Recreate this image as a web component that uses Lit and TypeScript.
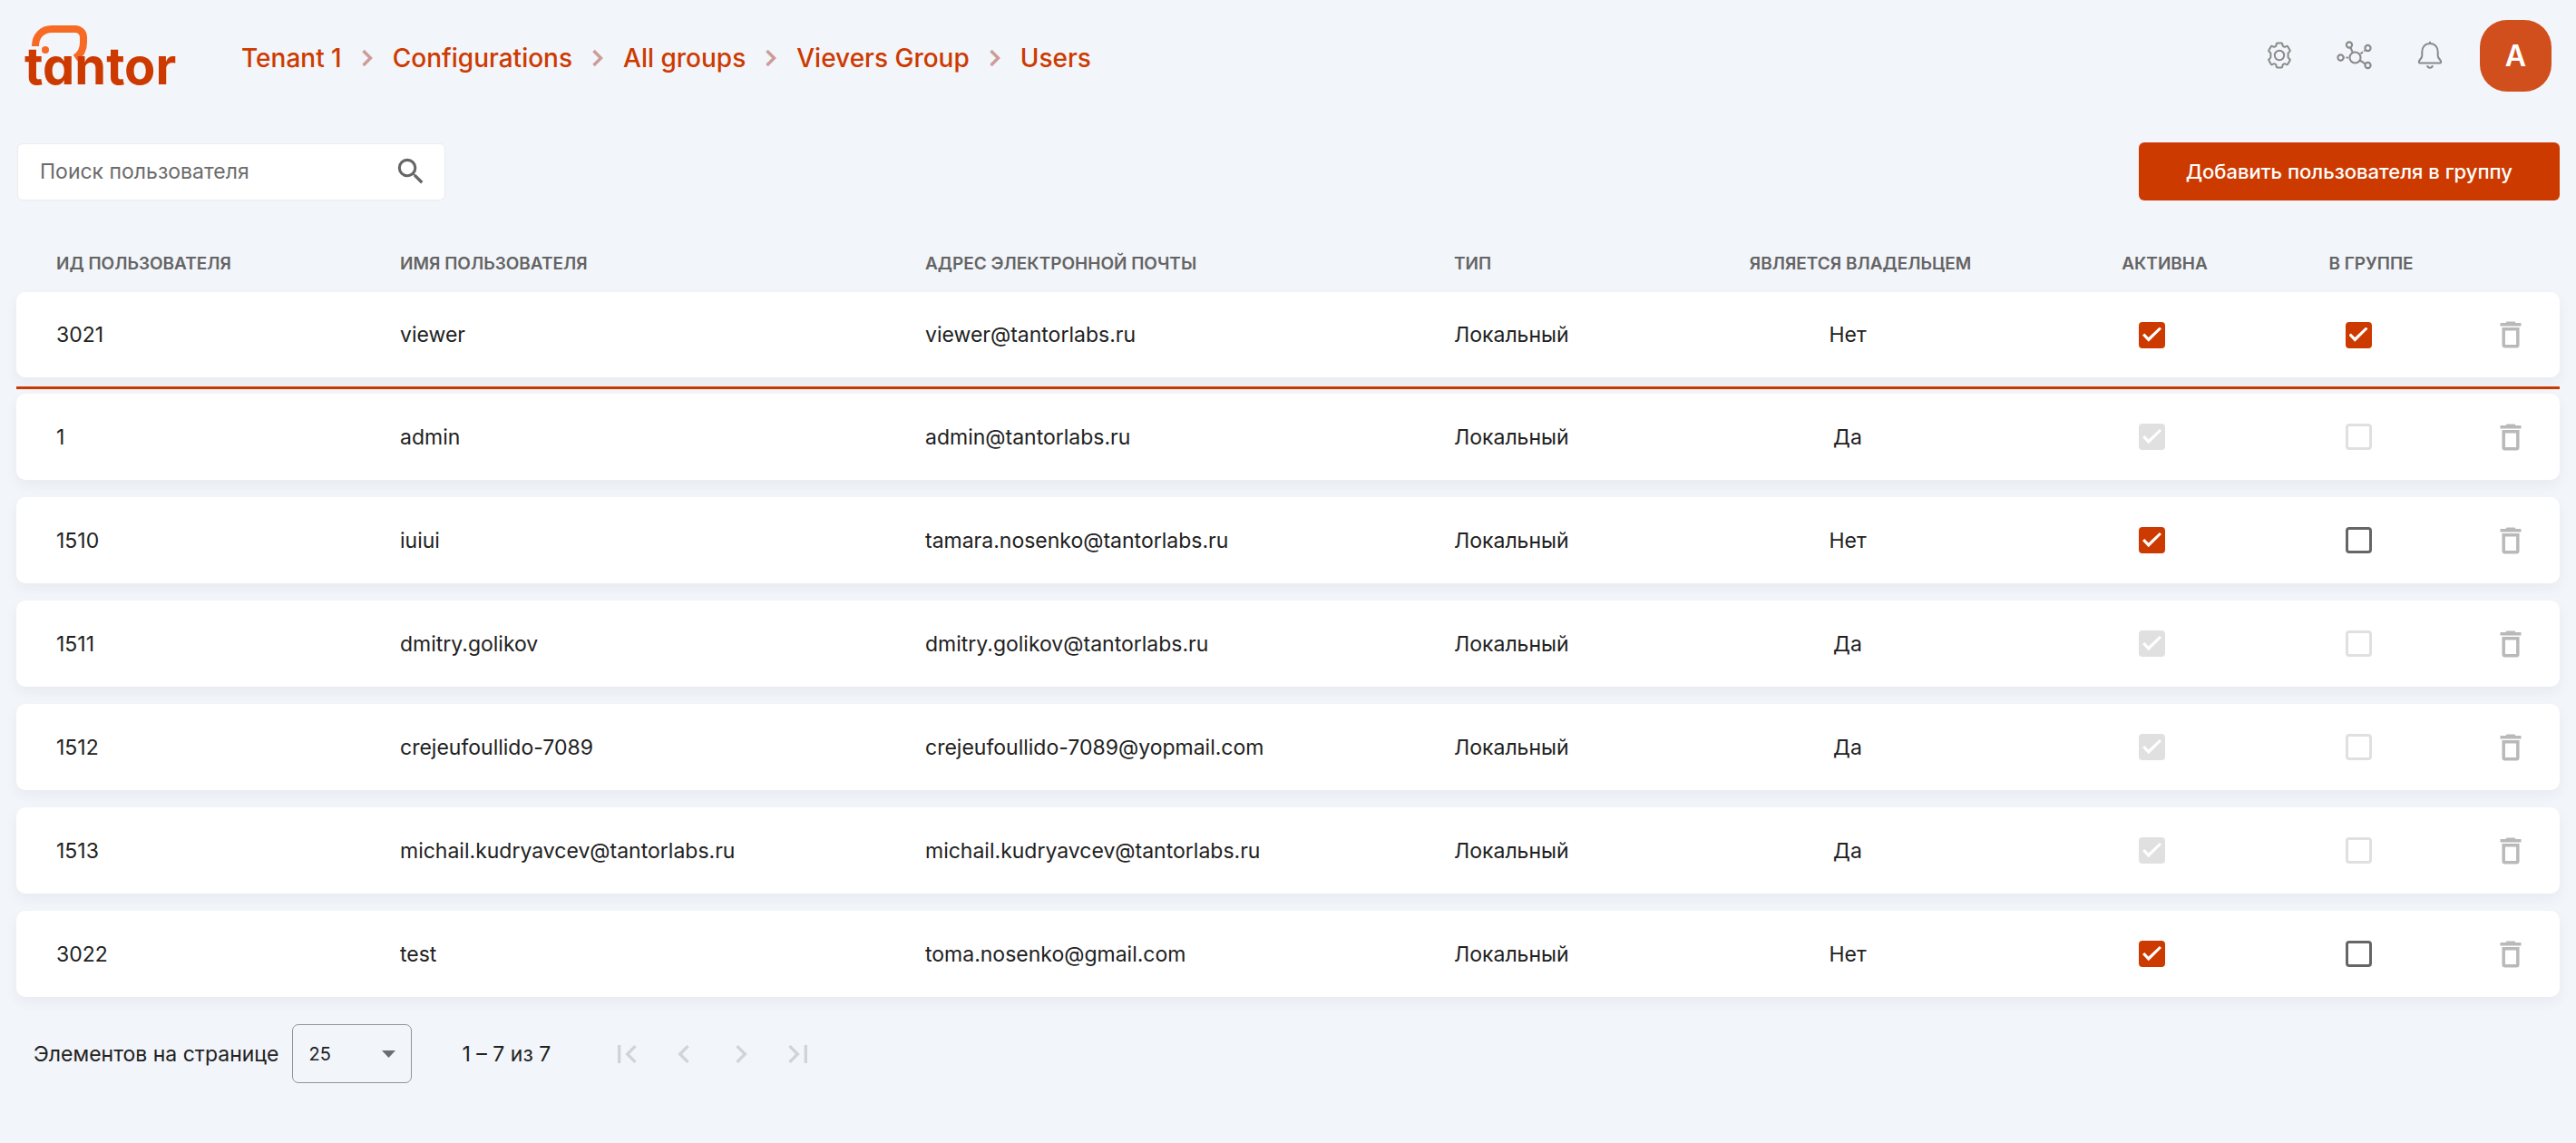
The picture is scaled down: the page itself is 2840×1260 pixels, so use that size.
import { LitElement, html, svg, css, nothing } from "lit";
import { customElement, property, state } from "lit/decorators.js";

interface User {
  id: number;
  name: string;
  email: string;
  owner: boolean;
  active: boolean;
  inGroup: boolean;
}

const USERS: User[] = [
  { id: 3021, name: "viewer", email: "viewer@tantorlabs.ru", owner: false, active: true, inGroup: true },
  { id: 1, name: "admin", email: "admin@tantorlabs.ru", owner: true, active: true, inGroup: false },
  { id: 1510, name: "iuiui", email: "tamara.nosenko@tantorlabs.ru", owner: false, active: true, inGroup: false },
  { id: 1511, name: "dmitry.golikov", email: "dmitry.golikov@tantorlabs.ru", owner: true, active: true, inGroup: false },
  { id: 1512, name: "crejeufoullido-7089", email: "crejeufoullido-7089@yopmail.com", owner: true, active: true, inGroup: false },
  { id: 1513, name: "michail.kudryavcev@tantorlabs.ru", email: "michail.kudryavcev@tantorlabs.ru", owner: true, active: true, inGroup: false },
  { id: 3022, name: "test", email: "toma.nosenko@gmail.com", owner: false, active: true, inGroup: false },
];

const ICONS = {
  gear: svg`<g fill="none" stroke="currentColor" stroke-width="2" stroke-linejoin="round"><circle cx="15" cy="15" r="5.2"/><path d="M12.6 1.500h4.800q.8 0 .9.8l.2 1.700q.1.700.7 1l1 .6q.6.300 1.200 0l1.600-.7q.8-.3 1.200.4l2.500 4.300q.4.700-.2 1.200l-1.300 1q-.6.400-.6 1.100v4.200q0 .7.6 1.100l1.300 1q.6.500.2 1.200l-2.500 4.300q-.4.700-1.200.4l-1.600-.7q-.6-.3-1.200 0l-1 .6q-.6.300-.7 1l-.2 1.700q-.1.800-.9.800h-4.800q-.8 0-.9-.8l-.2-1.700q-.1-.7-.7-1l-1-.6q-.6-.3-1.200 0l-1.600.7q-.8.300-1.200-.4l-2.500-4.300q-.4-.7.2-1.200l1.300-1q.6-.4.6-1.100v-4.200q0-.7-.6-1.100l-1.300-1q-.6-.5-.2-1.200l2.500-4.300q.4-.7 1.200-.4l1.600.7q.6.300 1.200 0l1-.6q.6-.3.7-1l.2-1.700q.1-.8.900-.8z"/></g>`,
};

const sharedText = css`
  :host {
    font-family: Inter, "Open Sans", sans-serif;
    color: #212121;
  }
  * {
    box-sizing: border-box;
  }
  a {
    color: inherit;
    text-decoration: none;
  }
  button,
  input,
  select {
    font: inherit;
    color: inherit;
    margin: 0;
  }
  button {
    display: flex;
    align-items: center;
    justify-content: center;
    padding: 0;
    border: 0;
    background: none;
    cursor: pointer;
  }
  svg {
    display: block;
    flex: none;
    overflow: visible;
  }
`;

@customElement("app-header")
export class AppHeader extends LitElement {
  @property({ attribute: false }) crumbs: string[] = [];

  static styles = [
    sharedText,
    css`
      .bar {
        display: flex;
        align-items: center;
        height: 124px;
        padding: 0 27px 0 26px;
      }
      .wordmark {
        font-family: Inter, sans-serif;
        font-size: 56px;
        font-weight: 700;
        font-feature-settings: "cv11";
        fill: #cd3a00;
      }
      .crumbs {
        flex: 1;
        margin: 0 0 0 68px;
        padding: 4px 0 0;
        list-style: none;
        display: flex;
        align-items: center;
        gap: 22px;
        font-size: 28px;
        line-height: 36px;
        font-weight: 500;
        color: #cd3a00;
      }
      .crumb {
        display: flex;
        align-items: center;
        gap: 22px;
        white-space: nowrap;
      }
      .chevron {
        color: #cc9c96;
      }
      .actions {
        display: flex;
        align-items: center;
        gap: 35px;
        margin-bottom: 2px;
        color: #8a8a8a;
      }
      .icon {
        width: 48px;
        height: 48px;
      }
      .avatar {
        width: 79px;
        height: 79px;
        margin-left: -4px;
        border-radius: 30px;
        background: #d14f1c;
        color: #fff;
        font-size: 32px;
        font-weight: 600;
      }
    `,
  ];

  render() {
    return html`
      <header class="bar">
        <a class="logo" href="#" aria-label="tantor">
          <svg width="172" height="72" viewBox="0 0 172 72">
            <path
              d="M13 25C13 13 21 6 31 6h26a9 9 0 0 1 9 9v6c0 7-3 13-9 17"
              fill="none"
              stroke="#f66a25"
              stroke-width="8"
            />
            <circle cx="24" cy="29" r="4" fill="#f66a25" />
            <text class="wordmark" x="1" y="67">tantor</text>
          </svg>
        </a>
        <ol class="crumbs">
          ${this.crumbs.map(
            (crumb, i) => html`<li class="crumb">
              ${i > 0
                ? html`<svg class="chevron" width="12" height="20" viewBox="0 0 12 20">
                    <path d="M1.500 2l8 8-8 8" fill="none" stroke="currentColor" stroke-width="3.400" />
                  </svg>`
                : nothing}
              <a href="#">${crumb}</a>
            </li>`,
          )}
        </ol>
        <div class="actions">
          <button class="icon" aria-label="Настройки">
            <svg width="30" height="30" viewBox="0 0 30 30">${ICONS.gear}</svg>
          </button>
          <button class="icon" aria-label="Топология">
            <svg width="40" height="32" viewBox="0 0 40 32" fill="none" stroke="currentColor" stroke-width="2.100">
              <circle cx="20.500" cy="18.500" r="6" />
              <circle cx="14" cy="4.500" r="3.100" />
              <circle cx="34.500" cy="8" r="3.100" />
              <circle cx="4.500" cy="18.500" r="3.100" />
              <circle cx="34.500" cy="27" r="3.100" />
              <path d="M15.400 7.500l2.400 5.300M25.700 21.500l6 3.800M31.500 10.500l-1.200.8M29 12.300l-2.500 2M8 18.500h1M10.500 18.500h2.500" />
            </svg>
          </button>
          <button class="icon" aria-label="Уведомления">
            <svg width="28" height="32" viewBox="0 0 28 32" fill="none" stroke="currentColor" stroke-width="2">
              <path d="M14 .7v2.600M14 3C8.500 3 5.300 7 5.300 12v4.500c0 2.800-3.500 4.500-3.500 6.700 0 .8.500 1.200 1.100 1.200h22.200c.6 0 1.100-.4 1.100-1.200 0-2.200-3.500-3.900-3.500-6.700V12c0-5-3.200-9-8.700-9z" />
              <path d="M11 27.200c.4 1.500 1.500 2.500 3 2.500s2.600-1 3-2.500" />
            </svg>
          </button>
          <button class="avatar" aria-label="Профиль">A</button>
        </div>
      </header>
    `;
  }
}

@customElement("users-toolbar")
export class UsersToolbar extends LitElement {
  static styles = [
    sharedText,
    css`
      .toolbar {
        display: flex;
        align-items: center;
        justify-content: space-between;
        padding: 33px 18px 0 19px;
      }
      .search {
        display: flex;
        align-items: center;
        width: 472px;
        height: 63px;
        padding: 0 18px 0 24px;
        border: 1px solid #ebebeb;
        border-radius: 6px;
        background: #fff;
        color: #666;
      }
      .query {
        flex: 1;
        min-width: 0;
        padding: 0;
        border: 0;
        outline: 0;
        background: none;
        font-size: 23px;
        line-height: 32px;
      }
      .query::placeholder {
        color: #6b6b6b;
        opacity: 1;
      }
      .add {
        height: 64px;
        padding: 0 52px;
        border-radius: 6px;
        background: #cd3a00;
        color: #fff;
        font-size: 22px;
        font-weight: 500;
      }
    `,
  ];

  render() {
    return html`
      <div class="toolbar">
        <div class="search">
          <input class="query" type="text" placeholder="Поиск пользователя" aria-label="Поиск пользователя" />
          <svg width="38" height="38" viewBox="0 0 24 24" fill="currentColor">
            <path
              d="M15.500 14h-.79l-.28-.27A6.471 6.471 0 0 0 16 9.500 6.500 6.500 0 1 0 9.500 16c1.610 0 3.090-.59 4.230-1.570l.27.28v.79l5 4.990L20.490 19l-4.990-5zm-6 0C7.010 14 5 11.990 5 9.500S7.010 5 9.500 5 14 7.010 14 9.500 11.990 14 9.500 14z"
            />
          </svg>
        </div>
        <button class="add">Добавить пользователя в группу</button>
      </div>
    `;
  }
}

@customElement("users-table")
export class UsersTable extends LitElement {
  @property({ attribute: false }) users: User[] = [];

  static styles = [
    sharedText,
    css`
      .table {
        display: block;
        padding: 0 18px;
        font-size: 23px;
        line-height: 28px;
      }
      .head {
        display: block;
      }
      .row {
        display: grid;
        grid-template-columns: 379fr 579fr 583fr 212fr 444fr 227fr 228fr 108fr;
        align-items: center;
        padding-left: 44px;
      }
      .titles {
        height: 101px;
        padding-top: 38px;
        font-size: 19px;
        color: #646464;
      }
      .title {
        padding: 0;
        text-align: left;
        font-weight: 600;
        white-space: nowrap;
      }
      .title.mid {
        padding-left: 28px;
        text-align: center;
      }
      .body {
        display: flex;
        flex-direction: column;
        gap: 19px;
      }
      .body.members {
        padding-bottom: 10px;
        margin-bottom: 5px;
        border-bottom: 3px solid #cd3a00;
      }
      .card {
        height: 95px;
        border-radius: 10px;
        background: #fff;
        box-shadow: 0 6px 14px rgba(40, 60, 80, 0.05);
      }
      .members .card {
        height: 94px;
      }
      .cell {
        padding: 0;
        min-width: 0;
      }
      .mid {
        display: flex;
        justify-content: center;
      }
      .check {
        appearance: none;
        display: grid;
        place-items: center;
        width: 29px;
        height: 29px;
        border: 3px solid #666;
        border-radius: 4px;
        background: #fff;
      }
      .check:checked {
        border-color: #cd3a00;
        background: #cd3a00;
      }
      .check:disabled {
        border-color: #e0e0e0;
      }
      .check:checked:disabled {
        background: #e0e0e0;
      }
      .check:checked::after {
        content: "";
        width: 21px;
        height: 17px;
        background: #fff;
        clip-path: polygon(0 53%, 11% 41%, 32% 67%, 90% 0, 100% 12%, 32% 96%);
      }
      .trash {
        width: 48px;
        height: 48px;
        color: #b9b9b9;
      }
    `,
  ];

  private renderRow(user: User) {
    return html`<tr class="row card">
      <td class="cell">${user.id}</td>
      <td class="cell">${user.name}</td>
      <td class="cell">${user.email}</td>
      <td class="cell">Локальный</td>
      <td class="cell mid">${user.owner ? "Да" : "Нет"}</td>
      <td class="cell mid">
        <input class="check" type="checkbox" aria-label="Активна" .checked=${user.active} ?disabled=${user.owner} />
      </td>
      <td class="cell mid">
        <input class="check" type="checkbox" aria-label="В группе" .checked=${user.inGroup} ?disabled=${user.owner} />
      </td>
      <td class="cell mid">
        <button class="trash" aria-label="Удалить">
          <svg width="24" height="30" viewBox="0 0 24 30">
            <path d="M.5 2H6.500l1-1.500h9l1 1.500h6v3.500H.5z" fill="currentColor" />
            <path d="M4.200 8.700h15.600v17.500a1.500 1.500 0 0 1-1.500 1.500H5.700a1.500 1.500 0 0 1-1.500-1.500z" fill="none" stroke="currentColor" stroke-width="3.500" />
          </svg>
        </button>
      </td>
    </tr>`;
  }

  render() {
    const members = this.users.filter((u) => u.inGroup);
    const others = this.users.filter((u) => !u.inGroup);
    return html`
      <table class="table">
        <thead class="head">
          <tr class="row titles">
            <th class="title">ИД ПОЛЬЗОВАТЕЛЯ</th>
            <th class="title">ИМЯ ПОЛЬЗОВАТЕЛЯ</th>
            <th class="title">АДРЕС ЭЛЕКТРОННОЙ ПОЧТЫ</th>
            <th class="title">ТИП</th>
            <th class="title mid">ЯВЛЯЕТСЯ ВЛАДЕЛЬЦЕМ</th>
            <th class="title mid">АКТИВНА</th>
            <th class="title mid">В ГРУППЕ</th>
            <th class="title"></th>
          </tr>
        </thead>
        <tbody class="body members">
          ${members.map((u) => this.renderRow(u))}
        </tbody>
        <tbody class="body">
          ${others.map((u) => this.renderRow(u))}
        </tbody>
      </table>
    `;
  }
}

@customElement("users-paginator")
export class UsersPaginator extends LitElement {
  @property({ type: Number }) total = 0;

  static styles = [
    sharedText,
    css`
      .pager {
        display: flex;
        align-items: center;
        padding: 30px 37px;
        font-size: 23px;
        line-height: 28px;
      }
      .size {
        display: grid;
        align-items: center;
        margin: 0 56px 0 14px;
      }
      .select {
        grid-area: 1 / 1;
        appearance: none;
        width: 132px;
        height: 65px;
        padding: 0 18px;
        border: 1px solid #919499;
        border-radius: 7px;
        background: none;
        font-size: 20px;
      }
      .caret {
        grid-area: 1 / 1;
        justify-self: end;
        margin-right: 18px;
        color: #6b6d70;
        pointer-events: none;
      }
      .nav {
        display: flex;
        margin-left: 52px;
      }
      .step {
        width: 63px;
        height: 63px;
        color: #d0d3d8;
      }
    `,
  ];

  private step(label: string, d: string) {
    return html`<button class="step" aria-label=${label} disabled>
      <svg width="40" height="40" viewBox="0 0 24 24" fill="currentColor"><path d=${d} /></svg>
    </button>`;
  }

  render() {
    return html`
      <div class="pager">
        <label for="size">Элементов на странице</label>
        <div class="size">
          <select class="select" id="size">
            <option>25</option>
            <option>50</option>
            <option>100</option>
          </select>
          <svg class="caret" width="15" height="8" viewBox="0 0 15 8"><path d="M0 0h15L7.500 8z" fill="currentColor" /></svg>
        </div>
        <span>1 – ${this.total} из ${this.total}</span>
        <div class="nav">
          ${this.step("Первая страница", "M18.410 16.590L13.820 12l4.590-4.590L17 6l-6 6 6 6zM6 6h2v12H6z")}
          ${this.step("Предыдущая страница", "M15.410 7.410L14 6l-6 6 6 6 1.410-1.410L10.830 12z")}
          ${this.step("Следующая страница", "M10 6L8.590 7.410 13.170 12l-4.580 4.590L10 18l6-6z")}
          ${this.step("Последняя страница", "M5.590 7.410L10.180 12l-4.590 4.590L7 18l6-6-6-6zM16 6h2v12h-2z")}
        </div>
      </div>
    `;
  }
}

@customElement("app-root")
export class AppRoot extends LitElement {
  @state() private users = USERS;

  static styles = css`
    :host {
      display: block;
      min-height: 100vh;
      background: #f2f5fa;
    }
    .block {
      display: block;
    }
  `;

  render() {
    return html`
      <app-header
        class="block"
        .crumbs=${["Tenant 1", "Configurations", "All groups", "Vievers Group", "Users"]}
      ></app-header>
      <main>
        <users-toolbar class="block"></users-toolbar>
        <users-table class="block" .users=${this.users}></users-table>
        <users-paginator class="block" .total=${this.users.length}></users-paginator>
      </main>
    `;
  }
}
